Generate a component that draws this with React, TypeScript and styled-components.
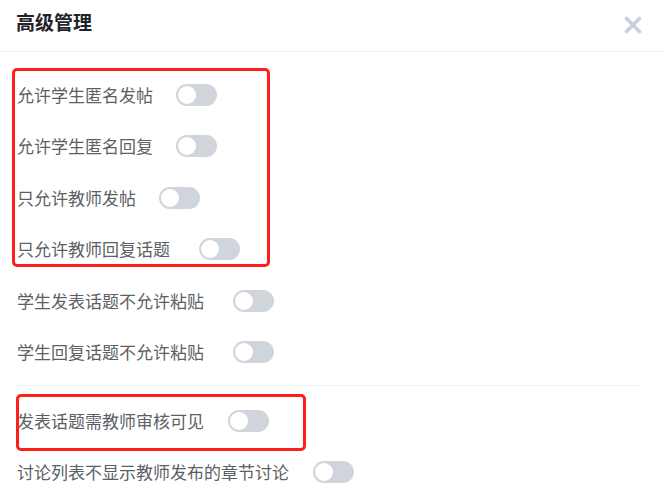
import React, { useState } from 'react';
import styled, { createGlobalStyle } from 'styled-components';

const GlobalStyle = createGlobalStyle`
  html, body {
    margin: 0;
    padding: 0;
    background: #fff;
  }
  body {
    font-family: 'Noto Sans CJK SC', 'Noto Sans', sans-serif;
  }
`;

type Setting = { id: number; label: string; on: boolean; gap: number };

const initialSettings: Setting[] = [
  { id: 0, label: '允许学生匿名发帖', on: false, gap: 23 },
  { id: 1, label: '允许学生匿名回复', on: false, gap: 23 },
  { id: 2, label: '只允许教师发帖', on: false, gap: 23 },
  { id: 3, label: '只允许教师回复话题', on: false, gap: 29 },
  { id: 4, label: '学生发表话题不允许粘贴', on: false, gap: 29 },
  { id: 5, label: '学生回复话题不允许粘贴', on: false, gap: 29 },
  { id: 6, label: '发表话题需教师审核可见', on: false, gap: 24 },
  { id: 7, label: '讨论列表不显示教师发布的章节讨论', on: false, gap: 24 },
];

const App = () => {
  const [settings, setSettings] = useState<Setting[]>(initialSettings);

  const toggle = (id: number) => {
    setSettings((prev) =>
      prev.map((s) => (s.id === id ? { ...s, on: !s.on } : s))
    );
  };

  const renderRow = (s: Setting) => (
    <Row key={s.id}>
      <Label>{s.label}</Label>
      <Switch $on={s.on} $gap={s.gap} onClick={() => toggle(s.id)}>
        <Knob $on={s.on} />
      </Switch>
    </Row>
  );

  return (
    <>
      <GlobalStyle />
      <Dialog>
        <Header>
          <Title>高级管理</Title>
          <CloseButton aria-label='close'>
            <svg width='18' height='18' viewBox='0 0 18 18'>
              <path
                d='M2.5 2.5 L15.5 15.5 M15.5 2.5 L2.5 15.5'
                stroke='#c6d0e0'
                strokeWidth='3.6'
                strokeLinecap='round'
              />
            </svg>
          </CloseButton>
        </Header>
        <Body>
          {settings.slice(0, 6).map(renderRow)}
          <Divider />
          {settings.slice(6).map(renderRow)}

          {/* 标注框 */}
          <Highlight $left={12} $top={16} $width={258} $height={199} />
          <Highlight $left={16} $top={342} $width={290} $height={57} />
        </Body>
      </Dialog>
    </>
  );
};

export default App;

const Dialog = styled.div`
  width: 664px;
  height: 499px;
  overflow: hidden;
  background: #fff;
`;

const Header = styled.div`
  height: 52px;
  padding: 0 22px 8px 16px;
  border-bottom: 1px solid #f0f0f2;
  display: flex;
  align-items: center;
  justify-content: space-between;
  box-sizing: border-box;
`;

const Title = styled.h2`
  margin: 0;
  font-size: 19px;
  font-weight: 700;
  color: #1f2329;
  line-height: 26px;
`;

const CloseButton = styled.button`
  border: none;
  background: none;
  padding: 0;
  width: 18px;
  height: 18px;
  cursor: pointer;
  display: flex;
  margin-top: 6px;
`;

const Body = styled.div`
  position: relative;
  padding: 17px 22px 0 17px;
`;

const Row = styled.div`
  height: 51.5px;
  display: flex;
  align-items: center;
`;

const Label = styled.span`
  font-size: 17px;
  color: #5b5f66;
  line-height: 24px;
`;

const Switch = styled.div<{ $on: boolean; $gap: number }>`
  position: relative;
  margin-left: ${({ $gap }) => $gap}px;
  width: 41px;
  height: 22px;
  border-radius: 11px;
  background: ${({ $on }) => ($on ? '#409eff' : '#d0d5dc')};
  cursor: pointer;
  flex-shrink: 0;
`;

const Knob = styled.span<{ $on: boolean }>`
  position: absolute;
  top: 2px;
  left: ${({ $on }) => ($on ? '21px' : '2px')};
  width: 18px;
  height: 18px;
  border-radius: 50%;
  background: #fff;
`;

const Divider = styled.div`
  height: 1px;
  background: #f0f0f2;
  margin: 7px 0 9px -1px;
`;

const Highlight = styled.div<{
  $left: number;
  $top: number;
  $width: number;
  $height: number;
}>`
  position: absolute;
  left: ${({ $left }) => $left}px;
  top: ${({ $top }) => $top}px;
  width: ${({ $width }) => $width}px;
  height: ${({ $height }) => $height}px;
  border: 3px solid #ff1f1a;
  border-radius: 5px;
  box-sizing: border-box;
  pointer-events: none;
`;
